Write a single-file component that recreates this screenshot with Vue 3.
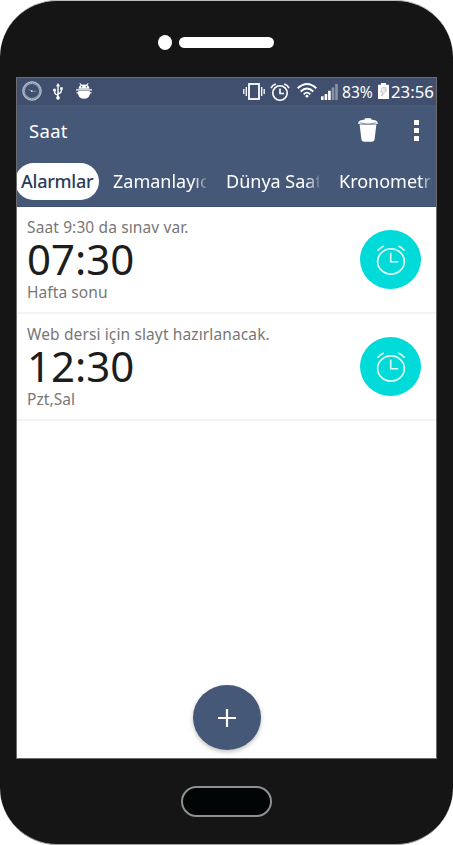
<script setup>
const tabs = [
  { name: 'zamanlayici', label: 'Zamanlayıcı' },
  { name: 'dunya', label: 'Dünya Saati' },
  { name: 'kronometre', label: 'Kronometre' },
]
const alarms = [
  { note: 'Saat 9:30 da sınav var.', time: '07:30', days: 'Hafta sonu' },
  { note: 'Web dersi için slayt hazırlanacak.', time: '12:30', days: 'Pzt,Sal' },
]
</script>

<template>
  <div class="phone">
    <div class="speaker">
      <span class="camera"></span>
      <span class="grille"></span>
    </div>

    <main class="screen">
      <div class="status">
        <svg class="s-clock" viewBox="0 0 20 20" width="20" height="20">
          <circle cx="10" cy="10" r="8.3" fill="none" stroke="#a3adc0" stroke-width="2.4" />
          <circle cx="10" cy="10" r="9.4" fill="none" stroke="#c9cfdb" stroke-width=".6" />
          <circle cx="10" cy="10" r="8" fill="none" stroke="#68768f" stroke-width="1" stroke-dasharray="1 1.5" />
          <path d="M6.5 8.5 10 10.3h4.5" fill="none" stroke="#8793aa" stroke-width=".8" />
          <circle cx="9.8" cy="10.1" r=".9" fill="#dde2ea" />
        </svg>
        <svg class="s-usb" viewBox="0 0 10 17" width="10" height="17" fill="none" stroke="#fff" stroke-width="1.4">
          <path d="M5 2v13M5 12.2C2 11.2 1.6 10.6 1.6 7.5M5 10.8c3-1 3.4-1.6 3.4-4.6" />
          <path d="M5 0 7 3.2H3zM.2 5.8h2.6v2.4H.2zM7.2 4.2h2.5v2.5H7.2z" fill="#fff" stroke="none" />
          <circle cx="5" cy="14.9" r="1.8" fill="#fff" stroke="none" />
        </svg>
        <svg class="s-bug" viewBox="0 0 16 16" width="16" height="16" fill="#fff">
          <path d="M2.600 5.700C2.600 3.900 3.600 2.600 4.700 2L3.300.5l.8-.5L5.800 1.700q2.200-.6 4.400 0L11.900 0l.8.5L11.300 2C12.400 2.600 13.400 3.900 13.400 5.700z" />
          <path d="M0 6.300h16v1.200H0zM2.200 8h11.600v3.500Q12.600 15.800 8 15.800T2.200 11.500zM.5 9.200h15v1.400H.5z" />
          <circle cx="5.700" cy="3.800" r=".7" fill="#414f6e" />
          <circle cx="10.300" cy="3.800" r=".7" fill="#414f6e" />
        </svg>
        <span class="spring"></span>
        <svg class="s-vibrate" viewBox="0 0 22 17" width="22" height="17" fill="none" stroke="#fff">
          <rect x="6" y="1" width="10" height="15" stroke-width="1.800" />
          <path d="M.8 6v5M21.200 6v5M3.300 4v9M18.700 4v9" stroke-width="1.300" />
        </svg>
        <svg class="s-alarm" viewBox="0 0 20 18" width="20" height="18" fill="none" stroke="#fff" stroke-width="1.600">
          <circle cx="10" cy="10" r="7.200" />
          <path d="M10 5.500V10.500h4M1 5.200C2 3 3.500 1.500 5.800.9M19 5.200C18 3 16.500 1.500 14.200.9" />
        </svg>
        <svg class="s-wifi" viewBox="0 0 20 15" width="20" height="15" fill="none" stroke="#fff" stroke-width="1.900">
          <path d="M.7 5.300Q10-3.200 19.300 5.300M3.700 8.500Q10 2.500 16.300 8.500M6.700 11.300Q10 8 13.300 11.300" />
          <circle cx="10" cy="13.200" r="1.400" fill="#fff" stroke="none" />
        </svg>
        <svg class="s-signal" viewBox="0 0 17 16" width="17" height="16">
          <path d="M0 12.300h2.600V16H0zM3.600 10h2.600v6H3.600zM7.100 6.700h2.600V16H7.100z" fill="#fff" />
          <path d="M10.700 3.500h2.600V16h-2.600zM14.200 0h2.600v16h-2.600z" fill="#8994a9" />
        </svg>
        <span class="percent">83%</span>
        <svg class="s-battery" viewBox="0 0 11 16" width="11" height="16">
          <path d="M0 1.700h3V0h5v1.700h3V16H0z" fill="#fff" />
          <path d="M4.200 4.700h4L7 7.300h1.800L3.500 13l1.300-4H2.700z" fill="#eee" stroke="#a9a9a9" stroke-width=".6" />
        </svg>
        <span class="clock">23:56</span>
      </div>

      <header class="bar">
        <h1 class="title">Saat</h1>
        <svg class="trash" viewBox="0 0 20 24" width="20" height="24">
          <path d="M1.600 6.500h16.800l-1.800 14.800Q16.400 23.700 13.500 23.700h-7Q3.600 23.700 3.400 21.300z" fill="#fff" />
          <path d="M.3 4.900C.3 2.800 3.300 1.700 6.800 1.400V.2h6.400v1.200c3.500.3 6.500 1.400 6.500 3.500v1H.3z" fill="#fff" />
          <path d="M1.500 4.900Q10 7.200 18.500 4.900" fill="none" stroke="#64738f" stroke-width=".8" />
        </svg>
        <div class="more"><i></i><i></i><i></i></div>
      </header>

      <nav class="tabs">
        <span class="pill">Alarmlar</span>
        <span v-for="t in tabs" :key="t.name" class="tab" :class="t.name">{{ t.label }}</span>
      </nav>

      <ul class="list">
        <li v-for="a in alarms" :key="a.time" class="alarm">
          <div class="info">
            <span class="note">{{ a.note }}</span>
            <span class="time">{{ a.time }}</span>
            <span class="days">{{ a.days }}</span>
          </div>
          <span class="toggle">
            <svg viewBox="0 0 30 30" width="30" height="30" fill="none" stroke="#e6fffd" stroke-width="1.600">
              <ellipse cx="15" cy="16.500" rx="13.400" ry="12.600" />
              <path d="M14.700 7.800v8.900h7.500M1.500 5.800C3.300 3.500 5 2.200 7.800 1M28.700 5.800C26.900 3.500 25.200 2.200 22.400 1" />
            </svg>
          </span>
        </li>
      </ul>

      <div class="add-row">
        <span class="add">
          <svg viewBox="0 0 18 18" width="18" height="18"><path d="M9 0v18M0 9h18" stroke="#fff" stroke-width="2.200" /></svg>
        </span>
      </div>
    </main>

    <div class="home"></div>
  </div>
</template>

<style>
body {
  background: #fff;
}
</style>

<style scoped>
.phone {
  box-sizing: border-box;
  width: 453px;
  height: 845px;
  display: flex;
  flex-direction: column;
  align-items: center;
  background: #151515;
  border-top: 1px solid #b9bbbc;
  border-bottom: 1px solid #a5a5a5;
  border-radius: 57px;
  overflow: hidden;
  font-family: "Noto Sans", sans-serif;
}
.speaker {
  box-sizing: border-box;
  width: 419px;
  height: 76px;
  flex: none;
  display: flex;
  align-items: flex-start;
  padding: 34px 0 0 141px;
  gap: 7px;
}
.camera {
  width: 14px;
  height: 15px;
  border-radius: 50%;
  background: #fff;
}
.grille {
  width: 95px;
  height: 11px;
  margin-top: 2px;
  border-radius: 6px;
  background: #fff;
}
.screen {
  box-sizing: border-box;
  width: 421px;
  height: 682px;
  flex: none;
  display: flex;
  flex-direction: column;
  border: 1px solid #6c6c6e;
  background: #fff;
  overflow: hidden;
}
.status {
  height: 27px;
  flex: none;
  display: flex;
  align-items: center;
  padding: 0 2px 0 5px;
  background: #414f6e;
  color: #fff;
}
.status svg,
.percent,
.clock {
  flex: none;
}
.s-clock,
.s-usb,
.s-bug {
  margin-bottom: 1px;
}
.s-usb { margin-left: 11px; }
.s-bug { margin-left: 13px; }
.spring { flex: 1; }
.s-alarm { margin-left: 5px; }
.s-wifi { margin-left: 7px; margin-bottom: 2px; }
.s-signal { margin-left: 4px; }
.percent {
  width: 31px;
  margin-left: 4px;
  font-size: 15.6px;
  line-height: 26px;
  white-space: nowrap;
}
.s-battery { margin-left: 5px; margin-bottom: 1px; }
.clock {
  width: 43px;
  margin-left: 2px;
  font-size: 16.8px;
  line-height: 26px;
}
.bar {
  height: 51px;
  flex: none;
  display: flex;
  align-items: center;
  padding: 0 17px 0 12px;
  background: #465877;
}
.title {
  flex: 1;
  margin: 0;
  font-size: 18.5px;
  font-weight: 400;
  line-height: 26px;
  letter-spacing: 0.3px;
  color: #fff;
}
.trash {
  margin-right: 36px;
  margin-bottom: 2px;
}
.more {
  display: flex;
  flex-direction: column;
  gap: 3px;
  margin-bottom: 1px;
}
.more i {
  width: 5px;
  height: 5px;
  background: #fff;
}
.tabs {
  box-sizing: border-box;
  height: 51px;
  flex: none;
  display: flex;
  align-items: center;
  background: #465877;
  border-bottom: 1px solid #3e4e78;
  font-size: 18px;
  line-height: 36px;
  color: #fff;
  white-space: nowrap;
}
.pill {
  box-sizing: border-box;
  width: 84px;
  height: 37px;
  flex: none;
  margin-left: -2px;
  padding-left: 6px;
  border-radius: 19px;
  background: #fff;
  color: #2c3b59;
  font-weight: 500;
  letter-spacing: -0.25px;
}
.tab {
  flex: none;
  overflow: hidden;
  -webkit-mask-image: linear-gradient(to right, #000 86%, rgba(0, 0, 0, 0.2));
  mask-image: linear-gradient(to right, #000 86%, rgba(0, 0, 0, 0.2));
}
.zamanlayici { width: 93px; margin-left: 14px; }
.dunya { width: 93px; margin-left: 20px; }
.kronometre { width: 93px; margin-left: 20px; }
.list {
  margin: 0;
  padding: 0;
  list-style: none;
}
.alarm {
  box-sizing: border-box;
  height: 107px;
  display: flex;
  align-items: center;
  justify-content: space-between;
  padding: 0 15px 0 10px;
  border-bottom: 2px solid #f3f3f3;
}
.info {
  display: flex;
  flex-direction: column;
  white-space: nowrap;
}
.note,
.days {
  font-size: 15.5px;
  line-height: 22px;
  letter-spacing: 0.08px;
  color: #777;
}
.note {
  letter-spacing: 0.12px;
}
.time {
  font-size: 42px;
  line-height: 42px;
  padding-bottom: 1px;
  color: #1d1d1d;
}
.toggle {
  width: 61px;
  height: 59px;
  display: flex;
  align-items: center;
  justify-content: center;
  border-radius: 50%;
  background: #00dbd9;
}
.add-row {
  margin-top: auto;
  display: flex;
  justify-content: center;
  padding-bottom: 8px;
}
.add {
  width: 68px;
  height: 65px;
  display: flex;
  align-items: center;
  justify-content: center;
  border-radius: 50%;
  background: #465877;
  box-shadow: 0 2px 4px rgba(0, 0, 0, 0.25);
}
.home {
  box-sizing: border-box;
  width: 91px;
  height: 31px;
  flex: none;
  margin-top: 27px;
  border: 2px solid #8f9191;
  border-radius: 16px;
  background: #010506;
}
</style>
